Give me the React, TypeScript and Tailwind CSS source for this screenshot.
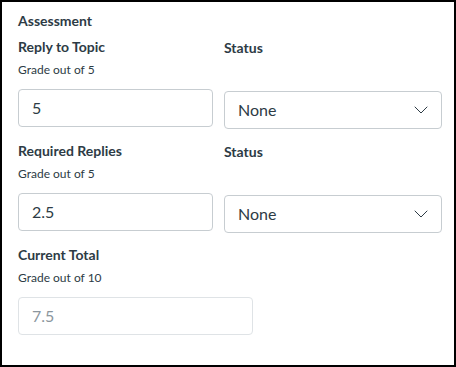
import React from "react";

function Chevron() {
  return (
    <svg width="14" height="8" viewBox="0 0 14 8" fill="none">
      <path d="M1 1 L7 7 L13 1" stroke="#2d3b45" strokeWidth="1" strokeLinecap="round" strokeLinejoin="round" />
    </svg>
  );
}

function Select() {
  return (
    <div className="flex h-[38px] w-[218px] items-center justify-between rounded-[4px] border border-[#c7cdd1] bg-white pl-[13px] pr-[13px]">
      <span className="text-[16px] text-[#2d3b45]">None</span>
      <Chevron />
    </div>
  );
}

function Row({ label, sub, value }: { label: string; sub: string; value: string }) {
  return (
    <div className="flex gap-[11px]">
      <div className="flex w-[195px] flex-col">
        <div className="text-[14px] font-bold leading-[20px] text-[#2d3b45]">{label}</div>
        <div className="mt-[5px] text-[12px] leading-[16px] text-[#2d3b45]">{sub}</div>
        <div className="mt-[11px] flex h-[38px] items-center rounded-[4px] border border-[#c7cdd1] bg-white pl-[13px] text-[16px] text-[#2d3b45]">
          {value}
        </div>
      </div>
      <div className="flex w-[218px] flex-col">
        <div className="mt-[1px] text-[14px] font-bold leading-[20px] text-[#2d3b45]">Status</div>
        <div className="mt-[33px]">
          <Select />
        </div>
      </div>
    </div>
  );
}

export default function App() {
  return (
    <div className="h-[367px] w-[456px] border-2 border-black bg-white font-['Lato',sans-serif]">
      <div className="flex flex-col pl-[16px] pt-[9px]">
        <div className="text-[14px] font-bold leading-[20px] text-[#2d3b45]">Assessment</div>
        <div className="mt-[6px] flex flex-col gap-[12px]">
          <Row label="Reply to Topic" sub="Grade out of 5" value="5" />
          <Row label="Required Replies" sub="Grade out of 5" value="2.5" />
          <div className="flex w-[235px] flex-col">
            <div className="text-[14px] font-bold leading-[20px] text-[#2d3b45]">Current Total</div>
            <div className="mt-[5px] text-[12px] leading-[16px] text-[#2d3b45]">Grade out of 10</div>
            <div className="mt-[11px] flex h-[38px] items-center rounded-[4px] border border-[#dfe3e6] bg-white pl-[13px] text-[16px] text-[#8b969e]">
              7.5
            </div>
          </div>
        </div>
      </div>
    </div>
  );
}
